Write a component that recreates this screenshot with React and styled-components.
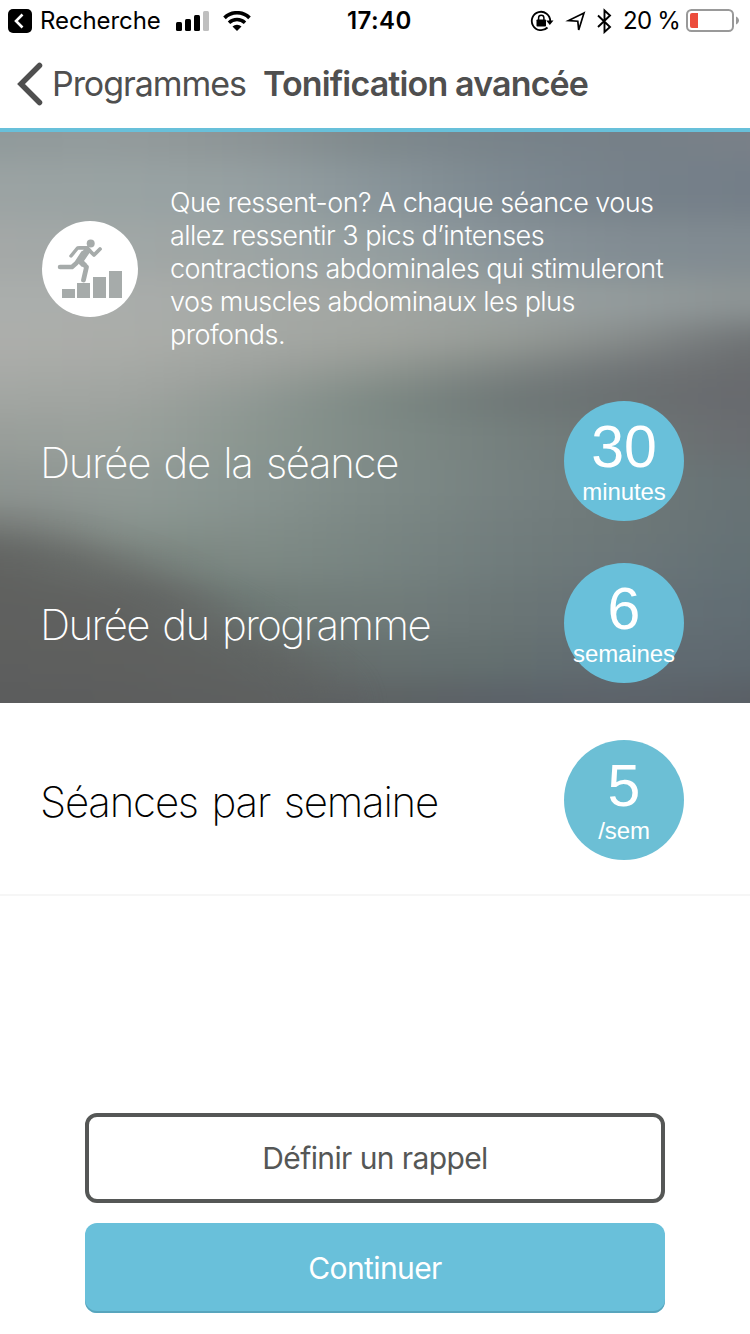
import React from "react";
import styled, { createGlobalStyle } from "styled-components";

const GlobalStyle = createGlobalStyle`
  * {
    box-sizing: border-box;
  }
  body {
    margin: 0;
    background: #fff;
    font-family: Inter, "Liberation Sans", sans-serif;
  }
`;

const Screen = styled.div`
  display: flex;
  flex-direction: column;
  width: 750px;
  height: 1334px;
  overflow: hidden;
  background: #fff;
`;

const StatusBar = styled.div`
  display: grid;
  grid-template-columns: 339px 80px 1fr;
  align-items: center;
  height: 40px;
  padding: 0 11px 0 8px;
  color: #000;
  font-size: 24px;
  line-height: 40px;
`;

const StatusGroup = styled.div`
  display: flex;
  align-items: center;
  justify-content: ${props => (props.$end ? "flex-end" : "flex-start")};
  svg {
    display: block;
    flex: none;
  }
`;

const StatusText = styled.span`
  margin: ${props => props.$margin || "0"};
  padding-top: 1px;
  font-weight: ${props => (props.$bold ? 600 : 400)};
  letter-spacing: ${props => props.$spacing || "0"};
  white-space: nowrap;
`;

const SignalIcon = styled.svg`
  margin-left: 15px;
`;

const WifiIcon = styled.svg`
  margin-left: 13px;
`;

const NavBar = styled.div`
  display: flex;
  align-items: center;
  height: 92px;
  padding: 0 0 0 17px;
  border-bottom: 4px solid #68c0da;
  color: #4f4f4f;
  font-size: 34px;
  line-height: 40px;
  white-space: nowrap;
`;

const BackLink = styled.div`
  display: flex;
  align-items: center;
  gap: 8px;
  width: 246px;
  letter-spacing: -1.05px;
`;

const Title = styled.div`
  font-weight: 600;
  letter-spacing: -0.85px;
`;

const Hero = styled.div`
  position: relative;
  height: 571px;
  padding-top: 54px;
  overflow: hidden;
  color: #fff;
`;

const Backdrop = styled.svg`
  position: absolute;
  top: 0;
  left: 0;
  width: 750px;
  height: 571px;
  filter: saturate(0.85);
`;

const Intro = styled.div`
  position: relative;
  display: flex;
  align-items: center;
  gap: 32px;
  height: 165px;
  padding-left: 42px;
  svg {
    flex: none;
  }
`;

const Description = styled.p`
  margin: 0;
  font-size: 27px;
  font-weight: 300;
  line-height: 33px;
  letter-spacing: -0.54px;
  white-space: pre-line;
`;

const Row = styled.div`
  position: relative;
  display: flex;
  align-items: center;
  justify-content: space-between;
  height: 120px;
  margin-top: ${props => props.$top}px;
  padding: 0 66px 0 40px;
`;

const Label = styled.div`
  font-size: 42px;
  font-weight: 200;
  line-height: 52px;
  letter-spacing: ${props => props.$spacing};
  word-spacing: 3px;
  padding-top: 4px;
  white-space: nowrap;
`;

const Bubble = styled.div`
  display: flex;
  flex-direction: column;
  align-items: center;
  width: 120px;
  height: 120px;
  padding-top: 16px;
  border-radius: 50%;
  background: ${props => props.$color || "#69c0da"};
  color: #fff;
  font-family: "Liberation Sans", Arial, sans-serif;
`;

const BubbleValue = styled.div`
  font-size: 59px;
  line-height: 61px;
`;

const BubbleUnit = styled.div`
  font-size: 24px;
  line-height: 27px;
  letter-spacing: -0.1px;
  white-space: nowrap;
`;

const Sessions = styled.div`
  height: 193px;
  border-bottom: 2px solid #f6f6f6;
  color: #000;
`;

const Actions = styled.div`
  display: flex;
  flex-direction: column;
  align-items: center;
  gap: 20px;
  margin-top: auto;
  padding-bottom: 21px;
`;

const Button = styled.button`
  width: 580px;
  height: 90px;
  padding: 0;
  border: ${props => (props.$primary ? "none" : "4px solid #555756")};
  border-radius: 12px;
  background: ${props => (props.$primary ? "#69c0da" : "#fff")};
  box-shadow: ${props => (props.$primary ? "inset 0 -2px 0 #58a5bd" : "none")};
  color: ${props => (props.$primary ? "#fff" : "#555756")};
  font-family: inherit;
  font-size: 30px;
  letter-spacing: -0.6px;
`;

// Colours of the blurred landscape, left to right, one line per height
const landscape = [
  [0, ["#8f9a9b", "#929b9c", "#8b9497", "#7e898d", "#76838c", "#74808a", "#79808a"]],
  [58, ["#9aa3a3", "#98a3a3", "#95a0a3", "#87959b", "#7b8993", "#74818c", "#727e8a"]],
  [118, ["#a3a8a7", "#a0a7a6", "#9ca5a4", "#949fa1", "#88949a", "#808c94", "#808b92"]],
  [173, ["#aaaeac", "#aaadab", "#a5a9a6", "#a1a6a2", "#98a09f", "#939c9d", "#8c9495"]],
  [208, ["#adaeab", "#abada9", "#a6a9a5", "#a0a49d", "#969c97", "#868c8b", "#6d7274"]],
  [238, ["#a8aaa7", "#a6a9a5", "#9ca19c", "#8e9690", "#7d8583", "#6e7476", "#696b6f"]],
  [268, ["#a2a6a2", "#9fa49f", "#8f9995", "#7b8883", "#6d7776", "#686f71", "#68696f"]],
  [298, ["#989e9a", "#99a19c", "#8a9690", "#7d8b86", "#74807e", "#6d7676", "#686c71"]],
  [358, ["#8d9491", "#909a96", "#869490", "#7c8b87", "#748180", "#6c797a", "#667175"]],
  [398, ["#767b78", "#88938e", "#81908a", "#788783", "#717e7e", "#6c7879", "#637176"]],
  [425, ["#646663", "#757e79", "#7b8a84", "#758581", "#6e7c7c", "#69767a", "#617075"]],
  [478, ["#61625f", "#626462", "#6d7a76", "#6f7c7a", "#697677", "#647177", "#5f6d75"]],
  [528, ["#5d5e5d", "#5f605e", "#616866", "#66706f", "#627071", "#606b73", "#5d6971"]],
  [571, ["#58595c", "#5a5b5c", "#5c5f60", "#5c6264", "#5a6169", "#5b636b", "#595f66"]]
];

const Landscape = () => (
  <Backdrop viewBox="0 0 750 571">
    <defs>
      <filter id="soft" filterUnits="userSpaceOnUse" x="-100" y="-100" width="950" height="771" colorInterpolationFilters="sRGB">
        <feGaussianBlur stdDeviation="28 15" />
      </filter>
      {landscape.map(([y, colors]) => (
        <linearGradient key={y} id={`band${y}`} gradientUnits="userSpaceOnUse" x1="0" y1="0" x2="750" y2="0">
          {colors.map((color, i) => (
            <stop key={i} offset={i / 6} stopColor={color} />
          ))}
        </linearGradient>
      ))}
    </defs>
    <g filter="url(#soft)">
      {landscape.map(([y], i) => {
        const top = i === 0 ? -100 : (landscape[i - 1][0] + y) / 2;
        return <rect key={y} x="-100" y={top} width="950" height={671 - top} fill={`url(#band${y})`} />;
      })}
    </g>
    <path
      d="M-100 405L60 410L130 432L200 465L270 505L330 550L340 671L-100 671z"
      fill="#5f605f"
      opacity="0.5"
      filter="url(#soft)"
    />
  </Backdrop>
);

const RunnerIcon = () => (
  <svg width="96" height="96" viewBox="0 0 96 96">
    <circle cx="48" cy="48" r="48" fill="#fff" />
    <g fill="#a6abaa">
      <path d="M20 68h13v9H20zM35 62h13v15H35zM51 56h13v21H51zM67 50h13v27H67z" />
      <circle cx="48.700" cy="22.500" r="4" />
      <path d="M35 25h11l3.500 4-7.500 11 3 3-5 3-5-5 7-13z" />
    </g>
    <g fill="none" stroke="#a6abaa" strokeLinecap="round" strokeLinejoin="round">
      <path d="M29 35l6.500-8H45" strokeWidth="3.500" />
      <path d="M47 29l5 5 6-6" strokeWidth="3.800" />
      <path d="M41 32l-6.500 10-4.500 4H18" strokeWidth="4.500" />
      <path d="M38 40l6.500 6-3 13" strokeWidth="4.800" />
    </g>
  </svg>
);

const StatusLeft = () => (
  <StatusGroup>
    <svg width="24" height="24" viewBox="0 0 24 24">
      <rect width="24" height="24" rx="5" />
      <path d="M14.500 5.500L8 12l6.500 6.500" fill="none" stroke="#fff" strokeWidth="2.600" />
    </svg>
    <StatusText $margin="0 0 0 8px" $spacing="-0.1px">Recherche</StatusText>
    <SignalIcon width="34" height="20" viewBox="0 0 34 20">
      <rect x="0" y="11" width="6" height="9" rx="1.500" />
      <rect x="9" y="8" width="6" height="12" rx="1.500" />
      <rect x="18" y="4" width="6" height="16" rx="1.500" />
      <rect x="27" y="0" width="6" height="20" rx="1.500" fill="#bfbfbf" />
    </SignalIcon>
    <WifiIcon width="28" height="20" viewBox="0 0 28 20">
      <path d="M1.500 6.800a18 18 0 0 1 25 0" fill="none" stroke="#000" strokeWidth="3.700" />
      <path d="M6 11.800a11.500 11.500 0 0 1 16 0" fill="none" stroke="#000" strokeWidth="3.500" />
      <path d="M9.500 15.500a6.500 6.500 0 0 1 9 0L14 20z" />
    </WifiIcon>
  </StatusGroup>
);

const StatusRight = () => (
  <StatusGroup $end>
    <svg width="84" height="26" viewBox="0 0 84 26">
      {/* rotation lock */}
      <path d="M17.500 19.500A9.200 9.200 0 1 1 20.200 13" fill="none" stroke="#000" strokeWidth="1.800" />
      <path d="M16.200 12.500h7.300L19.800 17z" />
      <rect x="6.500" y="11.500" width="9.500" height="7" rx="0.800" />
      <path d="M8.600 12V9.800a2.650 2.650 0 0 1 5.300 0V12" fill="none" stroke="#000" strokeWidth="1.500" />
      {/* location */}
      <path d="M54 5L38.500 12.600l9.300.600.900 8.800z" fill="none" stroke="#000" strokeWidth="1.700" />
      {/* bluetooth */}
      <path d="M68 7.500l12 11.500-5.500 5V2.500l5.500 5L68 19" fill="none" stroke="#000" strokeWidth="1.900" />
    </svg>
    <StatusText $margin="0 6px 0 9px" $spacing="-0.8px">20 %</StatusText>
    <svg width="53" height="24" viewBox="0 0 53 24">
      <rect x="1" y="1" width="46" height="21" rx="4.500" fill="#fff" stroke="#999" strokeWidth="2" />
      <path d="M4 6a2 2 0 0 1 2-2h6v15H6a2 2 0 0 1-2-2z" fill="#ec4c3c" />
      <path d="M50 7.500c4 2 4 6 0 8z" fill="#999" />
    </svg>
  </StatusGroup>
);

const Stat = (props) => (
  <Row $top={props.top}>
    <Label $spacing={props.spacing}>{props.label}</Label>
    <Bubble $color={props.color}>
      <BubbleValue>{props.value}</BubbleValue>
      <BubbleUnit>{props.unit}</BubbleUnit>
    </Bubble>
  </Row>
);

const App = () => {
  return (
    <Screen>
      <GlobalStyle />
      <StatusBar>
        <StatusLeft />
        <StatusText $bold $spacing="0.4px">17:40</StatusText>
        <StatusRight />
      </StatusBar>
      <NavBar>
        <BackLink>
          <svg width="27" height="44" viewBox="0 0 27 44">
            <path d="M22.500 3.500L4 22l18.500 18.500" fill="none" stroke="#4f4f4f" strokeWidth="5.500" strokeLinecap="round" />
          </svg>
          Programmes
        </BackLink>
        <Title>Tonification avancée</Title>
      </NavBar>
      <Hero>
        <Landscape />
        <Intro>
          <RunnerIcon />
          <Description>
            {"Que ressent-on? A chaque séance vous\nallez ressentir 3 pics d’intenses\ncontractions abdominales qui stimuleront\nvos muscles abdominaux les plus\nprofonds."}
          </Description>
        </Intro>
        <Stat top={50} label="Durée de la séance" spacing="-1.350px" value="30" unit="minutes" />
        <Stat top={42} label="Durée du programme" spacing="-1.550px" value="6" unit="semaines" />
      </Hero>
      <Sessions>
        <Stat top={37} label="Séances par semaine" spacing="-1.200px" value="5" unit="/sem" color="#6cbfd5" />
      </Sessions>
      <Actions>
        <Button>Définir un rappel</Button>
        <Button $primary>Continuer</Button>
      </Actions>
    </Screen>
  );
};

export default App;
